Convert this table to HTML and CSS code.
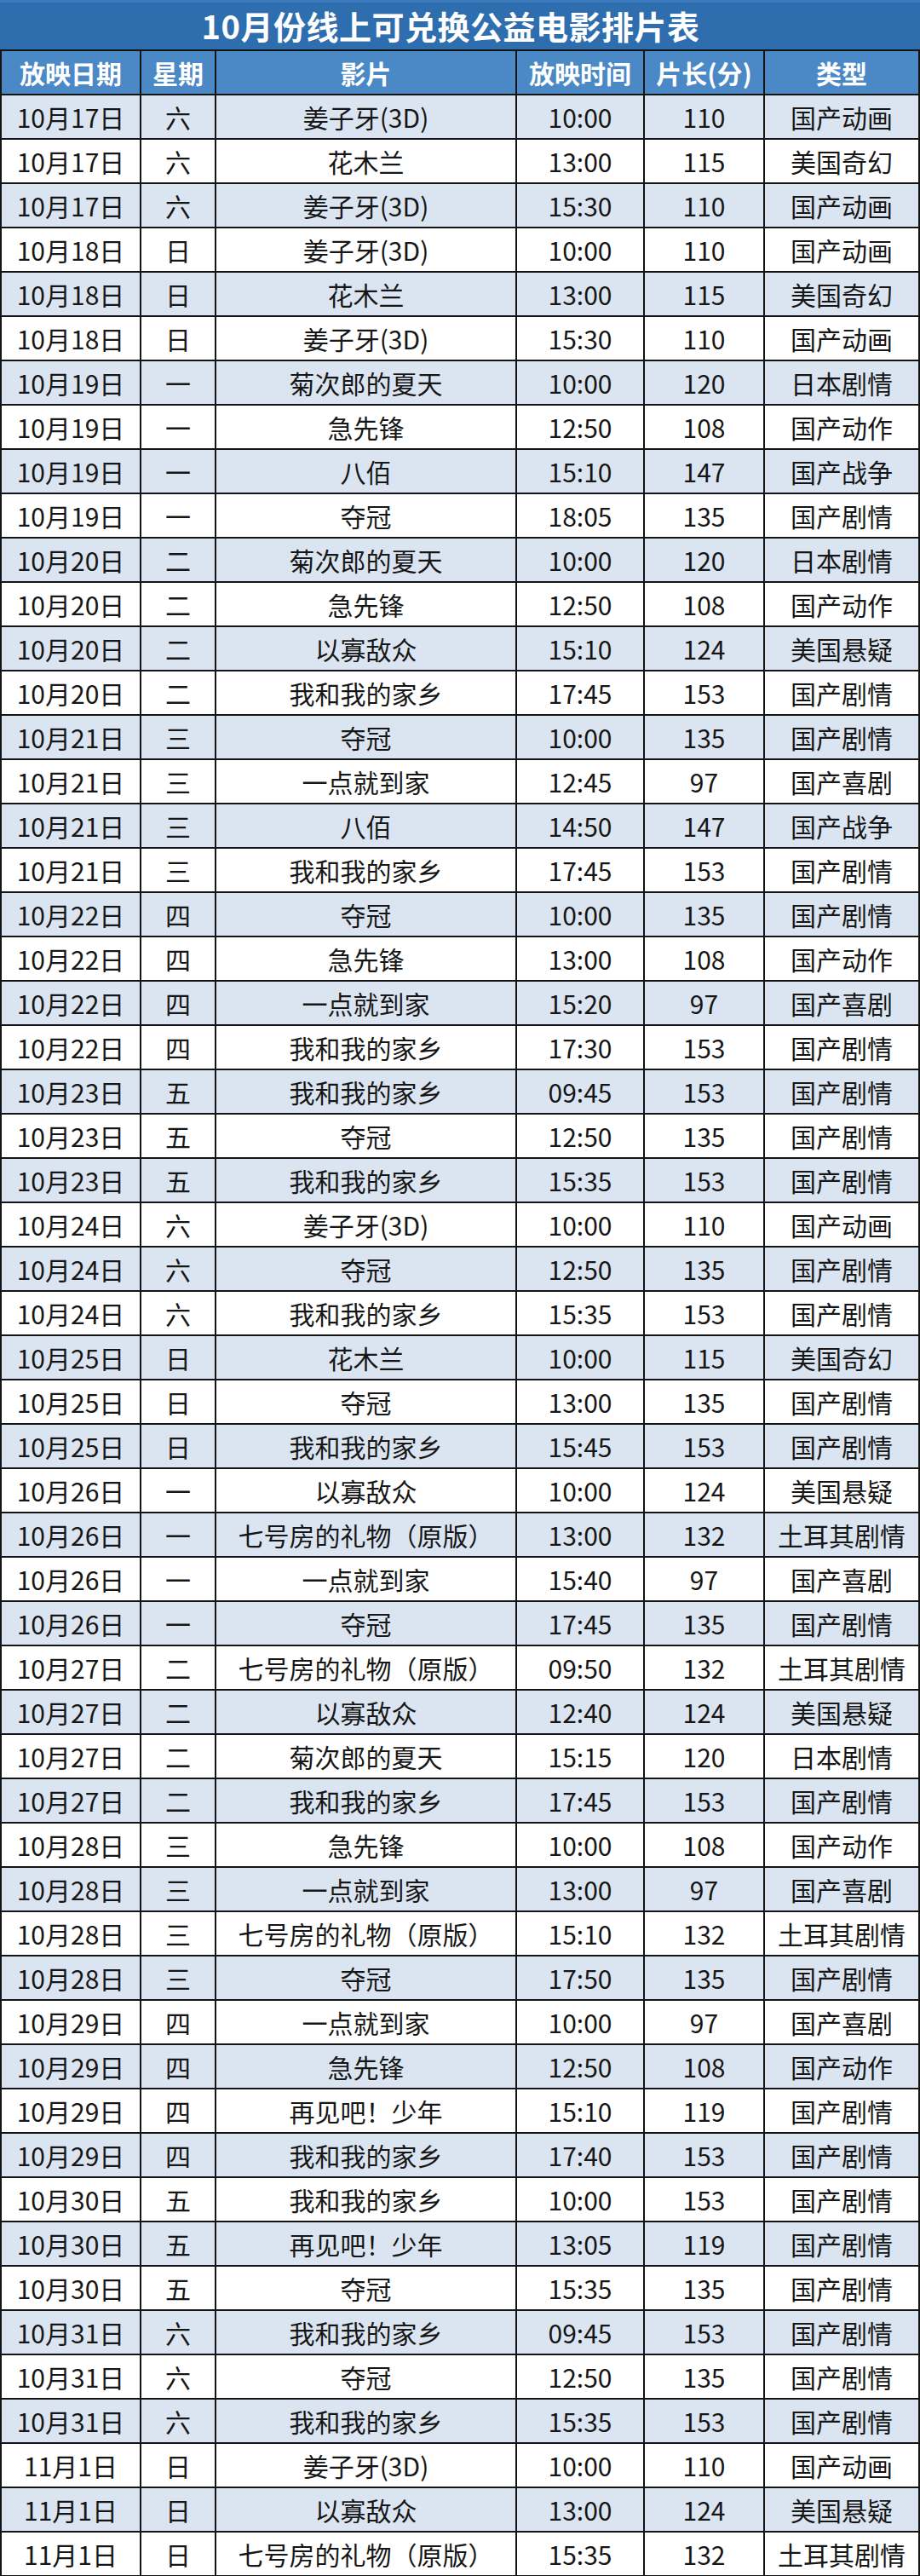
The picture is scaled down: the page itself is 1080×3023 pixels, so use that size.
FILE: index.html
```html
<!DOCTYPE html>
<html lang="zh-CN">
<head>
<meta charset="utf-8">
<title>10月份线上可兑换公益电影排片表</title>
<link rel="stylesheet" href="styles.css">
</head>
<body>
<div class="sheet">
  <div class="title">10月份线上可兑换公益电影排片表</div>
  <table class="schedule">
    <colgroup>
      <col class="c-date"><col class="c-week"><col class="c-film"><col class="c-time"><col class="c-len"><col class="c-type">
    </colgroup>
    <thead>
      <tr><th>放映日期</th><th>星期</th><th>影片</th><th>放映时间</th><th>片长(分)</th><th>类型</th></tr>
    </thead>
    <tbody>
      <tr><td>10月17日</td><td>六</td><td>姜子牙(3D)</td><td>10:00</td><td>110</td><td>国产动画</td></tr>
      <tr><td>10月17日</td><td>六</td><td>花木兰</td><td>13:00</td><td>115</td><td>美国奇幻</td></tr>
      <tr><td>10月17日</td><td>六</td><td>姜子牙(3D)</td><td>15:30</td><td>110</td><td>国产动画</td></tr>
      <tr><td>10月18日</td><td>日</td><td>姜子牙(3D)</td><td>10:00</td><td>110</td><td>国产动画</td></tr>
      <tr><td>10月18日</td><td>日</td><td>花木兰</td><td>13:00</td><td>115</td><td>美国奇幻</td></tr>
      <tr><td>10月18日</td><td>日</td><td>姜子牙(3D)</td><td>15:30</td><td>110</td><td>国产动画</td></tr>
      <tr><td>10月19日</td><td>一</td><td>菊次郎的夏天</td><td>10:00</td><td>120</td><td>日本剧情</td></tr>
      <tr><td>10月19日</td><td>一</td><td>急先锋</td><td>12:50</td><td>108</td><td>国产动作</td></tr>
      <tr><td>10月19日</td><td>一</td><td>八佰</td><td>15:10</td><td>147</td><td>国产战争</td></tr>
      <tr><td>10月19日</td><td>一</td><td>夺冠</td><td>18:05</td><td>135</td><td>国产剧情</td></tr>
      <tr><td>10月20日</td><td>二</td><td>菊次郎的夏天</td><td>10:00</td><td>120</td><td>日本剧情</td></tr>
      <tr><td>10月20日</td><td>二</td><td>急先锋</td><td>12:50</td><td>108</td><td>国产动作</td></tr>
      <tr><td>10月20日</td><td>二</td><td>以寡敌众</td><td>15:10</td><td>124</td><td>美国悬疑</td></tr>
      <tr><td>10月20日</td><td>二</td><td>我和我的家乡</td><td>17:45</td><td>153</td><td>国产剧情</td></tr>
      <tr><td>10月21日</td><td>三</td><td>夺冠</td><td>10:00</td><td>135</td><td>国产剧情</td></tr>
      <tr><td>10月21日</td><td>三</td><td>一点就到家</td><td>12:45</td><td>97</td><td>国产喜剧</td></tr>
      <tr><td>10月21日</td><td>三</td><td>八佰</td><td>14:50</td><td>147</td><td>国产战争</td></tr>
      <tr><td>10月21日</td><td>三</td><td>我和我的家乡</td><td>17:45</td><td>153</td><td>国产剧情</td></tr>
      <tr><td>10月22日</td><td>四</td><td>夺冠</td><td>10:00</td><td>135</td><td>国产剧情</td></tr>
      <tr><td>10月22日</td><td>四</td><td>急先锋</td><td>13:00</td><td>108</td><td>国产动作</td></tr>
      <tr><td>10月22日</td><td>四</td><td>一点就到家</td><td>15:20</td><td>97</td><td>国产喜剧</td></tr>
      <tr><td>10月22日</td><td>四</td><td>我和我的家乡</td><td>17:30</td><td>153</td><td>国产剧情</td></tr>
      <tr><td>10月23日</td><td>五</td><td>我和我的家乡</td><td>09:45</td><td>153</td><td>国产剧情</td></tr>
      <tr><td>10月23日</td><td>五</td><td>夺冠</td><td>12:50</td><td>135</td><td>国产剧情</td></tr>
      <tr><td>10月23日</td><td>五</td><td>我和我的家乡</td><td>15:35</td><td>153</td><td>国产剧情</td></tr>
      <tr><td>10月24日</td><td>六</td><td>姜子牙(3D)</td><td>10:00</td><td>110</td><td>国产动画</td></tr>
      <tr><td>10月24日</td><td>六</td><td>夺冠</td><td>12:50</td><td>135</td><td>国产剧情</td></tr>
      <tr><td>10月24日</td><td>六</td><td>我和我的家乡</td><td>15:35</td><td>153</td><td>国产剧情</td></tr>
      <tr><td>10月25日</td><td>日</td><td>花木兰</td><td>10:00</td><td>115</td><td>美国奇幻</td></tr>
      <tr><td>10月25日</td><td>日</td><td>夺冠</td><td>13:00</td><td>135</td><td>国产剧情</td></tr>
      <tr><td>10月25日</td><td>日</td><td>我和我的家乡</td><td>15:45</td><td>153</td><td>国产剧情</td></tr>
      <tr><td>10月26日</td><td>一</td><td>以寡敌众</td><td>10:00</td><td>124</td><td>美国悬疑</td></tr>
      <tr><td>10月26日</td><td>一</td><td>七号房的礼物（原版）</td><td>13:00</td><td>132</td><td>土耳其剧情</td></tr>
      <tr><td>10月26日</td><td>一</td><td>一点就到家</td><td>15:40</td><td>97</td><td>国产喜剧</td></tr>
      <tr><td>10月26日</td><td>一</td><td>夺冠</td><td>17:45</td><td>135</td><td>国产剧情</td></tr>
      <tr><td>10月27日</td><td>二</td><td>七号房的礼物（原版）</td><td>09:50</td><td>132</td><td>土耳其剧情</td></tr>
      <tr><td>10月27日</td><td>二</td><td>以寡敌众</td><td>12:40</td><td>124</td><td>美国悬疑</td></tr>
      <tr><td>10月27日</td><td>二</td><td>菊次郎的夏天</td><td>15:15</td><td>120</td><td>日本剧情</td></tr>
      <tr><td>10月27日</td><td>二</td><td>我和我的家乡</td><td>17:45</td><td>153</td><td>国产剧情</td></tr>
      <tr><td>10月28日</td><td>三</td><td>急先锋</td><td>10:00</td><td>108</td><td>国产动作</td></tr>
      <tr><td>10月28日</td><td>三</td><td>一点就到家</td><td>13:00</td><td>97</td><td>国产喜剧</td></tr>
      <tr><td>10月28日</td><td>三</td><td>七号房的礼物（原版）</td><td>15:10</td><td>132</td><td>土耳其剧情</td></tr>
      <tr><td>10月28日</td><td>三</td><td>夺冠</td><td>17:50</td><td>135</td><td>国产剧情</td></tr>
      <tr><td>10月29日</td><td>四</td><td>一点就到家</td><td>10:00</td><td>97</td><td>国产喜剧</td></tr>
      <tr><td>10月29日</td><td>四</td><td>急先锋</td><td>12:50</td><td>108</td><td>国产动作</td></tr>
      <tr><td>10月29日</td><td>四</td><td>再见吧！少年</td><td>15:10</td><td>119</td><td>国产剧情</td></tr>
      <tr><td>10月29日</td><td>四</td><td>我和我的家乡</td><td>17:40</td><td>153</td><td>国产剧情</td></tr>
      <tr><td>10月30日</td><td>五</td><td>我和我的家乡</td><td>10:00</td><td>153</td><td>国产剧情</td></tr>
      <tr><td>10月30日</td><td>五</td><td>再见吧！少年</td><td>13:05</td><td>119</td><td>国产剧情</td></tr>
      <tr><td>10月30日</td><td>五</td><td>夺冠</td><td>15:35</td><td>135</td><td>国产剧情</td></tr>
      <tr><td>10月31日</td><td>六</td><td>我和我的家乡</td><td>09:45</td><td>153</td><td>国产剧情</td></tr>
      <tr><td>10月31日</td><td>六</td><td>夺冠</td><td>12:50</td><td>135</td><td>国产剧情</td></tr>
      <tr><td>10月31日</td><td>六</td><td>我和我的家乡</td><td>15:35</td><td>153</td><td>国产剧情</td></tr>
      <tr><td>11月1日</td><td>日</td><td>姜子牙(3D)</td><td>10:00</td><td>110</td><td>国产动画</td></tr>
      <tr><td>11月1日</td><td>日</td><td>以寡敌众</td><td>13:00</td><td>124</td><td>美国悬疑</td></tr>
      <tr><td>11月1日</td><td>日</td><td>七号房的礼物（原版）</td><td>15:35</td><td>132</td><td>土耳其剧情</td></tr>
      <tr class="cut"><td></td><td></td><td></td><td></td><td></td><td></td></tr>
    </tbody>
  </table>
</div>
</body>
</html>
```
FILE: styles.css
```css
html, body {
  margin: 0;
  padding: 0;
  background: #ffffff;
}

body {
  font-family: "Noto Sans CJK SC", "Noto Sans", sans-serif;
  color: #161616;
}

.sheet {
  width: 1080px;
}

.title {
  height: 58px;
  box-sizing: border-box;
  background: #2f6eae;
  border-top: 3px solid #3b7bbd;
  color: #ffffff;
  font-weight: 700;
  font-size: 38px;
  line-height: 54px;
  text-align: center;
  padding-right: 22px;
  letter-spacing: 0.5px;
}

.schedule {
  width: 1078px;
  border-collapse: collapse;
  table-layout: fixed;
}

.c-date { width: 164px; }
.c-week { width: 88px; }
.c-film { width: 353px; }
.c-time { width: 150px; }
.c-len  { width: 141px; }
.c-type { width: 182px; }

.schedule th,
.schedule td {
  border: 2px solid #141414;
  height: 50px;
  padding: 0;
  text-align: center;
  vertical-align: middle;
  font-size: 30px;
  line-height: 50px;
  white-space: nowrap;
  overflow: hidden;
}

.schedule th {
  background: #4a88c6;
  color: #ffffff;
  font-weight: 700;
}

.schedule tbody tr:nth-child(odd) td {
  background: #dbe5f1;
}

.schedule tbody tr:nth-child(even) td {
  background: #ffffff;
}

.schedule tbody tr.cut td {
  background: #ffffff;
}
```
